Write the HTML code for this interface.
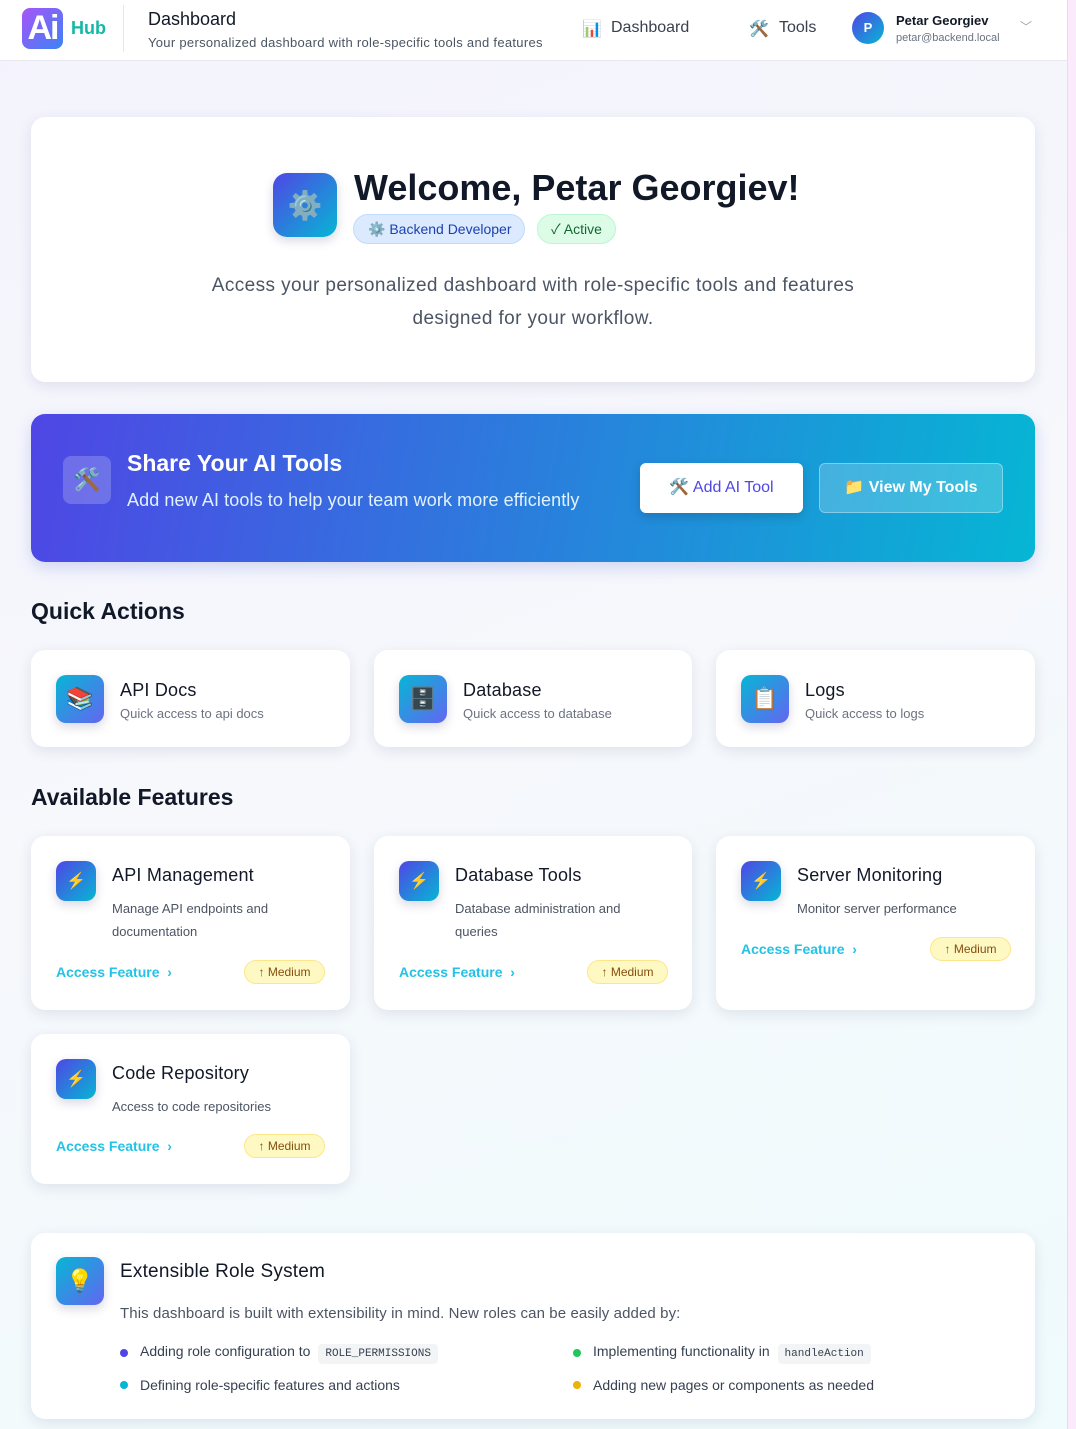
<!DOCTYPE html>
<html><head><meta charset="utf-8"><style>
*{box-sizing:border-box;margin:0;padding:0}
body{width:1076px;height:1429px;overflow:hidden;font-family:"Liberation Sans","Noto Sans CJK SC",sans-serif;background:linear-gradient(160deg,#f4f3fd 0%,#f6f8fc 50%,#effbfd 100%);position:relative;color:#111827}
.strip{position:absolute;right:0;top:0;width:9px;height:1429px;background:#fbeafc;border-left:1px solid #f0d8f3}
.hdr{position:absolute;left:0;top:0;width:1067px;height:61px;background:#fff;border-bottom:1px solid #e8e8ee}
.abs{position:absolute}
.card{position:absolute;background:#fff;border-radius:14px;box-shadow:0 4px 14px rgba(30,40,80,.10)}
.grad{background:linear-gradient(135deg,#4f46e5,#06b6d4)}
.gradr{background:linear-gradient(135deg,#06b6d4,#6366f1)}
.ic{position:absolute;border-radius:10px;display:flex;align-items:center;justify-content:center;box-shadow:0 4px 10px rgba(60,60,120,.2)}
.t{position:absolute;white-space:nowrap}
.badge{position:absolute;height:24px;border-radius:12px;background:#fef9c3;border:1px solid #fde68a;color:#854d0e;font-size:12px;line-height:22px;text-align:center;width:81px}
.acc{position:absolute;color:#22c3e6;font-size:14px;font-weight:bold}
.code{font-family:"Liberation Mono",monospace;font-size:11px;background:#f3f4f6;border-radius:4px;padding:4px 7px;margin-left:4px}
.dot{position:absolute;width:8px;height:8px;border-radius:50%}
.h{font-weight:normal;color:#111827;letter-spacing:.2px}
</style></head><body>
<div class="strip"></div>
<div class="hdr">
 <div class="abs" style="left:22px;top:8px;width:41px;height:41px;border-radius:8px;background:linear-gradient(135deg,#a855f7,#3b82f6);color:#fff;font-weight:bold;font-size:34px;line-height:41px;text-align:center;letter-spacing:-2px">Ai</div>
 <div class="t" style="left:71px;top:18px;font-size:18px;font-weight:bold;color:#14b8a6">Hub</div>
 <div class="abs" style="left:123px;top:5px;width:1px;height:47px;background:#e5e7eb"></div>
 <div class="t" style="left:148px;top:9px;font-size:18px;color:#111827">Dashboard</div>
 <div class="t" style="left:148px;top:35px;font-size:13px;color:#4b5563;letter-spacing:.3px">Your personalized dashboard with role-specific tools and features</div>
 <div class="t" style="left:582px;top:19px;font-size:16px">📊</div>
 <div class="t" style="left:611px;top:19px;font-size:16px;color:#374151">Dashboard</div>
 <div class="t" style="left:749px;top:19px;font-size:16px">🛠️</div>
 <div class="t" style="left:779px;top:19px;font-size:16px;color:#374151">Tools</div>
 <div class="abs grad" style="left:852px;top:12px;width:32px;height:32px;border-radius:50%;color:#fff;font-size:13px;font-weight:bold;text-align:center;line-height:32px">P</div>
 <div class="t" style="left:896px;top:13px;font-size:13px;font-weight:bold;color:#111827">Petar Georgiev</div>
 <div class="t" style="left:896px;top:32px;font-size:11px;color:#6b7280">petar@backend.local</div>
 <div class="t" style="left:1020px;top:18px;font-size:12px;color:#9ca3af">﹀</div>
</div>

<div class="card" style="left:31px;top:117px;width:1004px;height:265px">
 <div class="ic grad" style="left:242px;top:56px;width:64px;height:64px;border-radius:14px;font-size:28px">⚙️</div>
 <div class="t" style="left:323px;top:50px;font-size:36px;font-weight:bold;color:#111827">Welcome, Petar Georgiev!</div>
 <div class="abs" style="left:322px;top:97px;width:172px;height:30px;border-radius:15px;background:#dbeafe;border:1px solid #bfdbfe;color:#1e40af;font-size:14px;line-height:28px;padding-left:14px">⚙️ Backend Developer</div>
 <div class="abs" style="left:506px;top:97px;width:79px;height:30px;border-radius:15px;background:#dcfce7;border:1px solid #bbf7d0;color:#166534;font-size:14px;line-height:28px;text-align:center">✓ Active</div>
 <div class="abs" style="left:0;top:152px;width:1004px;text-align:center;font-size:19px;line-height:33px;color:#4b5563;letter-spacing:.4px">Access your personalized dashboard with role-specific tools and features<br>designed for your workflow.</div>
</div>

<div class="abs" style="left:31px;top:414px;width:1004px;height:148px;border-radius:14px;background:linear-gradient(100deg,#4f46e5,#06b6d4);box-shadow:0 6px 16px rgba(60,80,200,.2)">
 <div class="abs" style="left:32px;top:42px;width:48px;height:48px;border-radius:8px;background:rgba(255,255,255,.2);text-align:center;line-height:48px;font-size:22px">🛠️</div>
 <div class="t" style="left:96px;top:36px;font-size:23px;font-weight:bold;color:#fff">Share Your AI Tools</div>
 <div class="t" style="left:96px;top:76px;font-size:18px;color:#e0f2fe;letter-spacing:.1px">Add new AI tools to help your team work more efficiently</div>
 <div class="abs" style="left:609px;top:49px;width:163px;height:50px;border-radius:6px;background:#fff;color:#4f46e5;font-size:16px;line-height:50px;text-align:center;box-shadow:0 4px 10px rgba(0,0,0,.15)">🛠️ Add AI Tool</div>
 <div class="abs" style="left:788px;top:49px;width:184px;height:50px;border-radius:6px;background:rgba(255,255,255,.2);border:1px solid rgba(255,255,255,.35);color:#fff;font-size:16px;font-weight:bold;line-height:48px;text-align:center">📁 View My Tools</div>
</div>

<div class="t" style="left:31px;top:598px;font-size:23px;font-weight:bold">Quick Actions</div>
<div class="card" style="left:31px;top:650px;width:319px;height:97px"><div class="ic gradr" style="left:25px;top:25px;width:48px;height:48px;font-size:22px">📚</div><div class="t h" style="left:89px;top:30px;font-size:18px">API Docs</div><div class="t" style="left:89px;top:56px;font-size:13px;color:#6b7280">Quick access to api docs</div></div>
<div class="card" style="left:374px;top:650px;width:318px;height:97px"><div class="ic gradr" style="left:25px;top:25px;width:48px;height:48px;font-size:22px">🗄️</div><div class="t h" style="left:89px;top:30px;font-size:18px">Database</div><div class="t" style="left:89px;top:56px;font-size:13px;color:#6b7280">Quick access to database</div></div>
<div class="card" style="left:716px;top:650px;width:319px;height:97px"><div class="ic gradr" style="left:25px;top:25px;width:48px;height:48px;font-size:22px">📋</div><div class="t h" style="left:89px;top:30px;font-size:18px">Logs</div><div class="t" style="left:89px;top:56px;font-size:13px;color:#6b7280">Quick access to logs</div></div>

<div class="t" style="left:31px;top:784px;font-size:23px;font-weight:bold">Available Features</div>
<div class="card" style="left:31px;top:836px;width:319px;height:174px"><div class="ic grad" style="left:25px;top:25px;width:40px;height:40px;font-size:16px">⚡</div><div class="t h" style="left:81px;top:29px;font-size:18px">API Management</div><div class="abs" style="left:81px;top:61px;font-size:13px;line-height:23px;color:#4b5563">Manage API endpoints and<br>documentation</div><div class="acc" style="left:25px;top:128px">Access Feature &nbsp;›</div><div class="badge" style="left:213px;top:124px">↑ Medium</div></div>
<div class="card" style="left:374px;top:836px;width:318px;height:174px"><div class="ic grad" style="left:25px;top:25px;width:40px;height:40px;font-size:16px">⚡</div><div class="t h" style="left:81px;top:29px;font-size:18px">Database Tools</div><div class="abs" style="left:81px;top:61px;font-size:13px;line-height:23px;color:#4b5563">Database administration and<br>queries</div><div class="acc" style="left:25px;top:128px">Access Feature &nbsp;›</div><div class="badge" style="left:213px;top:124px">↑ Medium</div></div>
<div class="card" style="left:716px;top:836px;width:319px;height:174px"><div class="ic grad" style="left:25px;top:25px;width:40px;height:40px;font-size:16px">⚡</div><div class="t h" style="left:81px;top:29px;font-size:18px">Server Monitoring</div><div class="abs" style="left:81px;top:61px;font-size:13px;line-height:23px;color:#4b5563">Monitor server performance</div><div class="acc" style="left:25px;top:105px">Access Feature &nbsp;›</div><div class="badge" style="left:214px;top:101px">↑ Medium</div></div>
<div class="card" style="left:31px;top:1034px;width:319px;height:150px"><div class="ic grad" style="left:25px;top:25px;width:40px;height:40px;font-size:16px">⚡</div><div class="t h" style="left:81px;top:29px;font-size:18px">Code Repository</div><div class="abs" style="left:81px;top:61px;font-size:13px;line-height:23px;color:#4b5563">Access to code repositories</div><div class="acc" style="left:25px;top:104px">Access Feature &nbsp;›</div><div class="badge" style="left:213px;top:100px">↑ Medium</div></div>

<div class="card" style="left:31px;top:1233px;width:1004px;height:186px">
 <div class="ic gradr" style="left:25px;top:24px;width:48px;height:48px;font-size:22px">💡</div>
 <div class="t h" style="left:89px;top:28px;font-size:19px">Extensible Role System</div>
 <div class="t" style="left:89px;top:72px;font-size:15px;color:#4b5563;letter-spacing:.1px">This dashboard is built with extensibility in mind. New roles can be easily added by:</div>
 <div class="dot" style="left:89px;top:116px;background:#4f46e5"></div><div class="t" style="left:109px;top:110px;font-size:14px;color:#374151">Adding role configuration to <span class="code">ROLE_PERMISSIONS</span></div>
 <div class="dot" style="left:89px;top:148px;background:#06b6d4"></div><div class="t" style="left:109px;top:144px;font-size:14px;color:#374151">Defining role-specific features and actions</div>
 <div class="dot" style="left:542px;top:116px;background:#22c55e"></div><div class="t" style="left:562px;top:110px;font-size:14px;color:#374151">Implementing functionality in <span class="code">handleAction</span></div>
 <div class="dot" style="left:542px;top:148px;background:#eab308"></div><div class="t" style="left:562px;top:144px;font-size:14px;color:#374151">Adding new pages or components as needed</div>
</div>
</body></html>
